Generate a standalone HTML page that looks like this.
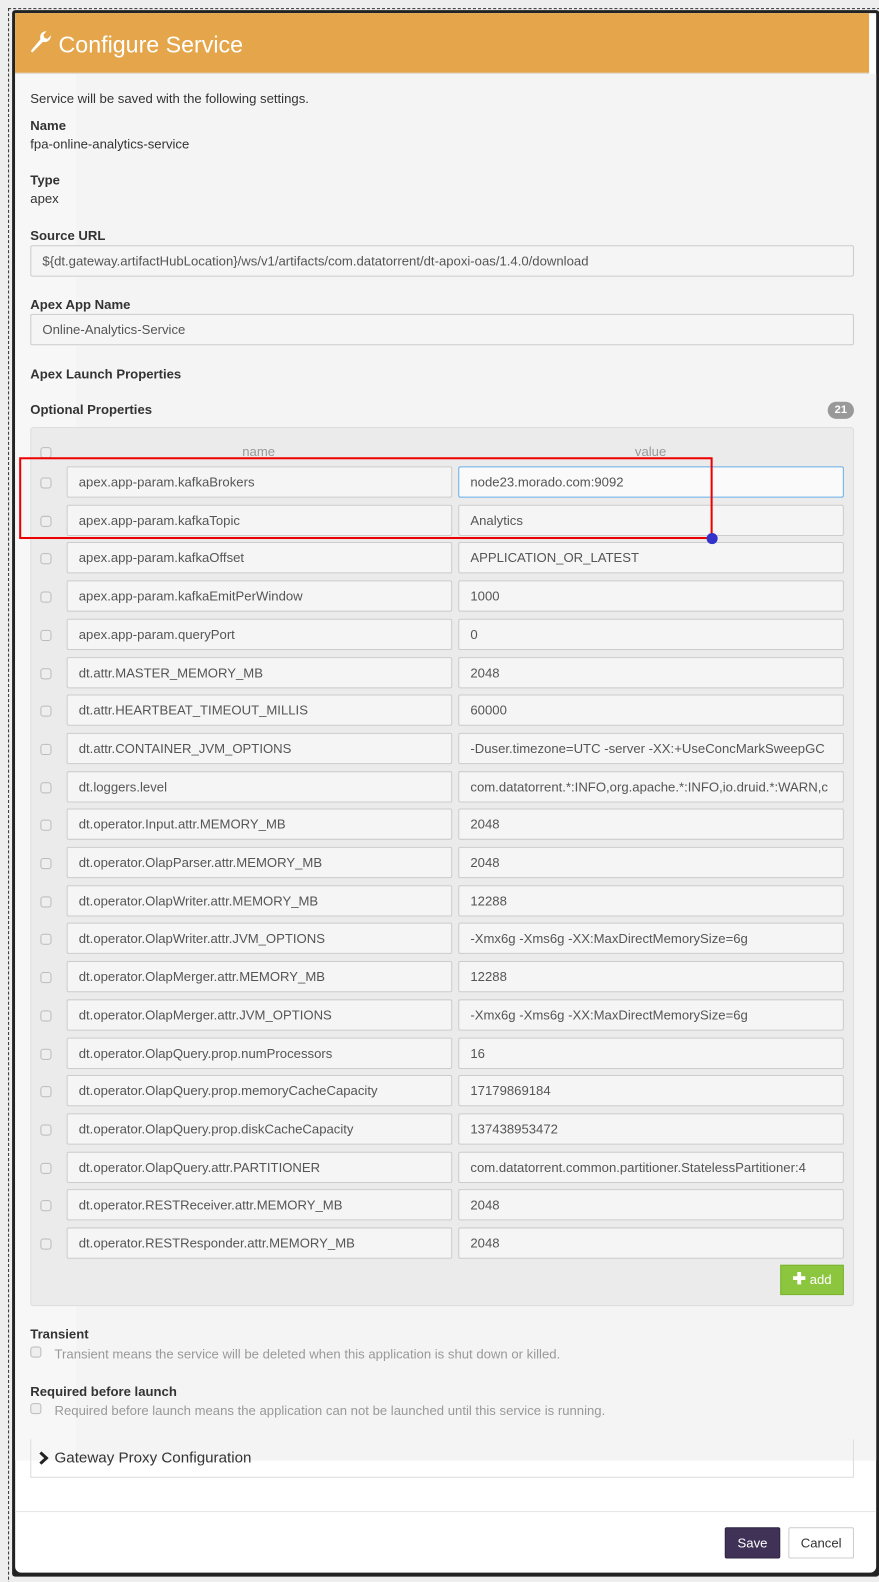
<!DOCTYPE html>
<html style="width:879px;height:1582px;overflow:hidden"><head><meta charset="utf-8"><style>
*{box-sizing:border-box;margin:0;padding:0}
body{width:879px;height:1582px;background:#eee;position:relative;overflow:hidden;font-family:"Liberation Sans",sans-serif;font-size:13px;color:#333}
#w{position:absolute;left:0;top:0;width:879px;height:1582px;transform:scale(1.0094);transform-origin:0 0}
.a{position:absolute}
.dash{left:8px;top:8px;width:864px;height:1562px;border:1px dashed #333}
.frame{left:12px;top:10px;width:859px;height:1552px;background:#222;border-radius:3px}
.modal{left:15px;top:13px;width:853px;height:1545px;background:#fff;border-radius:0 0 6px 6px}
.hdr{left:15px;top:13px;width:846px;height:60px;background:#e5a64b;color:#fff;font-size:23px;border-bottom:1px solid #ddd}
.ov{left:75px;top:73px;width:793px;height:1374px;background:#f4f4f4}
.ovl{left:15px;top:73px;width:60px;height:1374px;background:#f7f7f7}
.lbl{font-weight:bold;left:30px}
.txt{left:30px}
.inp{background:#f5f5f5;border:1px solid #ccc;border-radius:2px;height:31px;padding:0 11px;line-height:29px;white-space:nowrap;overflow:hidden;color:#555}
.cb{width:11px;height:11px;border:1px solid #bbb;border-radius:3px;background:#eee}
.panel{left:30px;top:423px;width:816px;height:871px;background:#ebebeb;border:1px solid #ddd;border-radius:3px}
.gray{color:#999}
</style></head><body><div id="w">
<div class="a dash"></div>
<div class="a frame"></div>
<div class="a modal"></div>
<div class="a ovl"></div>
<div class="a ov"></div>
<div class="a hdr"><svg class="a" style="left:14px;top:17px" width="22" height="24" viewBox="0 0 22 24"><path d="M3 22 L1.5 20.5 L11 9 C10 5 12 1 17 1 L14 4.5 L15 7.5 L18 8.5 L21.5 5 C21.5 10 17 12.5 13.5 11.5 Z" fill="#fff"/></svg><span class="a" style="left:43px;top:18px">Configure Service</span></div>
<div class="a txt" style="top:90px">Service will be saved with the following settings.</div>
<div class="a lbl" style="top:117px">Name</div>
<div class="a txt" style="top:135px">fpa-online-analytics-service</div>
<div class="a lbl" style="top:171px">Type</div>
<div class="a txt" style="top:189px">apex</div>
<div class="a lbl" style="top:226px">Source URL</div>
<div class="a inp" style="left:30px;top:243px;width:816px">${dt.gateway.artifactHubLocation}/ws/v1/artifacts/com.datatorrent/dt-apoxi-oas/1.4.0/download</div>
<div class="a lbl" style="top:294px">Apex App Name</div>
<div class="a inp" style="left:30px;top:311px;width:816px">Online-Analytics-Service</div>
<div class="a lbl" style="top:363px">Apex Launch Properties</div>
<div class="a lbl" style="top:398px">Optional Properties</div>
<div class="a" style="left:820px;top:398px;width:26px;height:17px;border-radius:9px;background:#999;color:#fff;font-size:11px;font-weight:bold;text-align:center;line-height:17px">21</div>
<div class="a panel"></div>
<div class="a cb" style="left:40px;top:443px"></div>
<div class="a gray" style="left:240px;top:440px">name</div>
<div class="a gray" style="left:629px;top:440px">value</div>
<div id="rows"></div>
<div class="a" style="left:773px;top:1253px;width:63px;height:30px;background:#8cc63f;border:1px solid #7ab32e;color:#fff;line-height:28px;text-align:center"><b style="font-size:16px">✚</b> add</div>
<div class="a lbl" style="top:1314px">Transient</div>
<div class="a cb" style="left:30px;top:1334px"></div>
<div class="a gray" style="left:54px;top:1334px">Transient means the service will be deleted when this application is shut down or killed.</div>
<div class="a lbl" style="top:1371px">Required before launch</div>
<div class="a cb" style="left:30px;top:1390px"></div>
<div class="a gray" style="left:54px;top:1390px">Required before launch means the application can not be launched until this service is running.</div>
<div class="a" style="left:30px;top:1426px;width:816px;height:38px;border:1px solid #ddd;border-top:none"></div>
<svg class="a" style="left:38px;top:1438px" width="10" height="13" viewBox="0 0 10 13"><path d="M2 1 L8 6.5 L2 12" stroke="#222" stroke-width="3" fill="none"/></svg>
<div class="a" style="left:54px;top:1436px;font-size:15px;color:#333">Gateway Proxy Configuration</div>
<div class="a" style="left:15px;top:1497px;width:853px;height:1px;background:#e5e5e5"></div>
<div class="a" style="left:718px;top:1513px;width:55px;height:31px;background:#3f3256;border:1px solid #2e2440;color:#fff;text-align:center;line-height:29px;border-radius:2px">Save</div>
<div class="a" style="left:781px;top:1513px;width:65px;height:31px;background:#fff;border:1px solid #ccc;color:#333;text-align:center;line-height:29px;border-radius:2px">Cancel</div>
<div class="a" style="left:19px;top:453px;width:687px;height:81px;border:2px solid #e00"></div>
<div class="a" style="left:700px;top:528px;width:11px;height:11px;border-radius:50%;background:#33c"></div>
</div>
<script>
var r=[["apex.app-param.kafkaBrokers","node23.morado.com:9092"],["apex.app-param.kafkaTopic","Analytics"],["apex.app-param.kafkaOffset","APPLICATION_OR_LATEST"],["apex.app-param.kafkaEmitPerWindow","1000"],["apex.app-param.queryPort","0"],["dt.attr.MASTER_MEMORY_MB","2048"],["dt.attr.HEARTBEAT_TIMEOUT_MILLIS","60000"],["dt.attr.CONTAINER_JVM_OPTIONS","-Duser.timezone=UTC -server -XX:+UseConcMarkSweepGC"],["dt.loggers.level","com.datatorrent.*:INFO,org.apache.*:INFO,io.druid.*:WARN,c"],["dt.operator.Input.attr.MEMORY_MB","2048"],["dt.operator.OlapParser.attr.MEMORY_MB","2048"],["dt.operator.OlapWriter.attr.MEMORY_MB","12288"],["dt.operator.OlapWriter.attr.JVM_OPTIONS","-Xmx6g -Xms6g -XX:MaxDirectMemorySize=6g"],["dt.operator.OlapMerger.attr.MEMORY_MB","12288"],["dt.operator.OlapMerger.attr.JVM_OPTIONS","-Xmx6g -Xms6g -XX:MaxDirectMemorySize=6g"],["dt.operator.OlapQuery.prop.numProcessors","16"],["dt.operator.OlapQuery.prop.memoryCacheCapacity","17179869184"],["dt.operator.OlapQuery.prop.diskCacheCapacity","137438953472"],["dt.operator.OlapQuery.attr.PARTITIONER","com.datatorrent.common.partitioner.StatelessPartitioner:4"],["dt.operator.RESTReceiver.attr.MEMORY_MB","2048"],["dt.operator.RESTResponder.attr.MEMORY_MB","2048"]];
var h="";for(var i=0;i<r.length;i++){var t=462+Math.round(i*37.7);
h+='<div class="a cb" style="left:40px;top:'+(t+11)+'px"></div><div class="a inp" style="left:66px;top:'+t+'px;width:382px">'+r[i][0]+'</div><div class="a inp" style="left:454px;top:'+t+'px;width:382px;'+(i==0?'border-color:#66afe9;background:#fafafa':'')+'">'+r[i][1]+'</div>';}
document.getElementById("rows").innerHTML=h;
</script>
</body></html>
